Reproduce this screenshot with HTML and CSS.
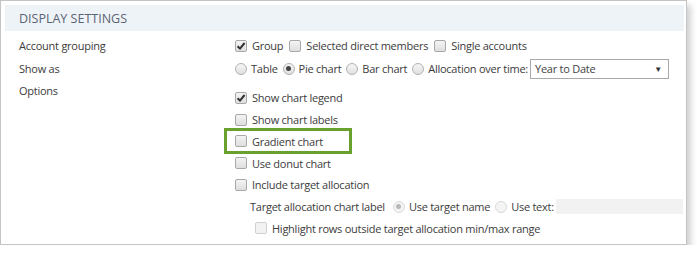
FILE: index.html
```html
<!DOCTYPE html>
<html>
<head>
<meta charset="utf-8">
<link rel="stylesheet" href="styles.css">
</head>
<body>
<div class="panel">
  <div class="header">DISPLAY SETTINGS</div>
  <div class="row r1">
    <div class="label">Account grouping</div>
    <div class="controls">
      <span class="cb checked"><svg viewBox="0 0 12 12"><path d="M2.6 6.2 L5 8.6 L9.6 3" /></svg></span><span class="txt">Group</span>
      <span class="cb"></span><span class="txt">Selected direct members</span>
      <span class="cb"></span><span class="txt">Single accounts</span>
    </div>
  </div>
  <div class="row r2">
    <div class="label">Show as</div>
    <div class="controls">
      <span class="rb"></span><span class="txt tight">Table</span>
      <span class="rb on"></span><span class="txt tight">Pie chart</span>
      <span class="rb"></span><span class="txt tight">Bar chart</span>
      <span class="rb"></span><span class="txt tight">Allocation over time:</span>
      <span class="select"><span>Year to Date</span><span class="arrow">▼</span></span>
    </div>
  </div>
  <div class="row r3">
    <div class="label">Options</div>
    <div class="options">
      <div class="opt"><span class="cb checked"><svg viewBox="0 0 12 12"><path d="M2.6 6.2 L5 8.6 L9.6 3" /></svg></span><span class="txt small">Show chart legend</span></div>
      <div class="opt"><span class="cb"></span><span class="txt small">Show chart labels</span></div>
      <div class="opt highlight"><span class="cb"></span><span class="txt small">Gradient chart</span></div>
      <div class="opt"><span class="cb"></span><span class="txt small">Use donut chart</span></div>
      <div class="opt"><span class="cb"></span><span class="txt small">Include target allocation</span></div>
      <div class="opt sub"><span class="txt subl">Target allocation chart label</span><span class="rb on disabled"></span><span class="txt tight">Use target name</span><span class="rb disabled"></span><span class="txt tight">Use text:</span><span class="textinput"></span></div>
      <div class="opt sub2"><span class="cb disabled"></span><span class="txt small">Highlight rows outside target allocation min/max range</span></div>
    </div>
  </div>
</div>
</body>
</html>
```
FILE: styles.css
```css
* { box-sizing: border-box; }
body {
  margin: 0;
  background: #fff;
  font-family: "Open Sans", "Noto Sans", sans-serif;
  font-size: 11px;
  color: #3c3c3c;
}
.panel {
  width: 687px;
  height: 245px;
  border: 1px solid #c4c4c4;
  box-shadow: 4px 5px 6px rgba(0,0,0,0.18);
  padding: 4px;
  background: #fff;
}
.header {
  height: 26px;
  width: 679px;
  background: #eef3f8;
  padding-left: 14px;
  display: flex;
  align-items: center;
  font-size: 12.5px;
  color: #5b6474;
}
.row {
  display: flex;
  align-items: flex-start;
}
.label {
  width: 230px;
  padding-left: 14px;
  flex: none;
  letter-spacing: -0.25px;
}
.r1 { margin-top: 3px; height: 23px; align-items: center; }
.r2 { height: 23px; align-items: center; }
.r3 { margin-top: 3px; }
.r3 .label { line-height: 16px; }
.controls {
  display: flex;
  align-items: center;
}
.cb {
  width: 12px;
  height: 12px;
  border: 1px solid #a8a8a8;
  border-radius: 2px;
  background: linear-gradient(#f4f4f4, #dedede);
  flex: none;
  display: inline-flex;
}
.cb svg { width: 12px; height: 12px; margin: -1px; }
.cb svg path { fill: none; stroke: #303030; stroke-width: 2; }
.cb.disabled { border-color: #d0d0d0; background: #f2f2f2; }
.txt { margin-left: 5px; margin-right: 6px; white-space: nowrap; letter-spacing: -0.25px; }
.txt.tight { margin-left: 4px; margin-right: 5px; }
.rb {
  width: 12px;
  height: 12px;
  border: 1px solid #b2b2b2;
  border-radius: 50%;
  background: linear-gradient(#f6f6f6, #e0e0e0);
  flex: none;
  display: inline-flex;
  align-items: center;
  justify-content: center;
}
.rb.on::after {
  content: "";
  width: 5px;
  height: 5px;
  border-radius: 50%;
  background: #444;
}
.rb.disabled { border-color: #dadada; background: #f4f4f4; }
.rb.disabled.on::after { background: #b8b8b8; }
.select {
  width: 139px;
  height: 20px;
  border: 1px solid #a9a9a9;
  display: flex;
  align-items: center;
  justify-content: space-between;
  padding: 0 6px 0 4px;
  margin-left: -3px;
  color: #444;
  letter-spacing: -0.25px;
}
.arrow { font-size: 8px; color: #333; }
.options { display: flex; flex-direction: column; padding-top: 4px; }
.opt {
  display: flex;
  align-items: center;
  height: 21.7px;
}
.highlight {
  margin-left: -11px;
  width: 128px;
  height: 26px;
  border: 3px solid #6aa12e;
  padding-left: 8px;
  margin-top: -2px;
  margin-bottom: -2px;
}
.sub { margin-left: 15px; }
.subl { margin-left: 0; margin-right: 8px; }
.sub2 { margin-left: 20px; }
.textinput {
  width: 127px;
  height: 15px;
  background: #f2f2f2;
  margin-left: -3px;
}
```
